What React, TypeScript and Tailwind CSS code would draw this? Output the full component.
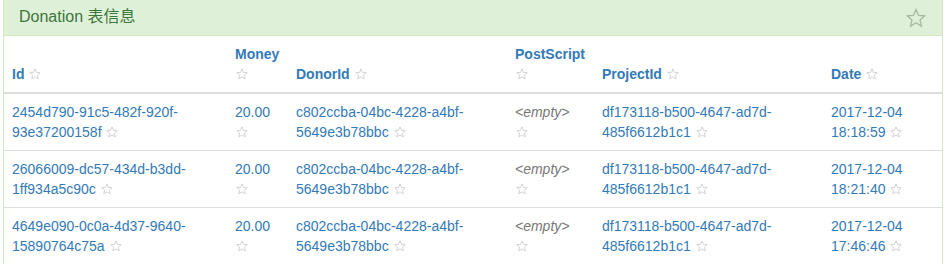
import React from 'react';

interface Donation {
  id: string;
  money: string;
  donorId: string;
  projectId: string;
  date: string;
}

const ROWS: Donation[] = [
  {
    id: '2454d790-91c5-482f-920f-93e37200158f',
    money: '20.00',
    donorId: 'c802ccba-04bc-4228-a4bf-5649e3b78bbc',
    projectId: 'df173118-b500-4647-ad7d-485f6612b1c1',
    date: '2017-12-04 18:18:59',
  },
  {
    id: '26066009-dc57-434d-b3dd-1ff934a5c90c',
    money: '20.00',
    donorId: 'c802ccba-04bc-4228-a4bf-5649e3b78bbc',
    projectId: 'df173118-b500-4647-ad7d-485f6612b1c1',
    date: '2017-12-04 18:21:40',
  },
  {
    id: '4649e090-0c0a-4d37-9640-15890764c75a',
    money: '20.00',
    donorId: 'c802ccba-04bc-4228-a4bf-5649e3b78bbc',
    projectId: 'df173118-b500-4647-ad7d-485f6612b1c1',
    date: '2017-12-04 17:46:46',
  },
];

const COLUMNS = [
  { label: 'Id', width: 'w-[223px]' },
  { label: 'Money', width: 'w-[61px]' },
  { label: 'DonorId', width: 'w-[219px]' },
  { label: 'PostScript', width: 'w-[87px]' },
  { label: 'ProjectId', width: 'w-[229px]' },
  { label: 'Date', width: 'w-[119px]' },
];

function Star({ className = 'h-3 w-[14px] text-[#c6c6c6]' }: { className?: string }) {
  return (
    <svg
      viewBox="0 0 24 24"
      className={`inline-block align-[-1px] ${className}`}
      fill="none"
      stroke="currentColor"
      strokeWidth="1.5"
      aria-hidden
    >
      <path d="M12 1.8l3 7 7.4.6-5.6 4.9 1.7 7.4L12 17.8l-6.5 3.9 1.7-7.4-5.6-4.9 7.4-.6z" />
    </svg>
  );
}

function Cell({ text, muted = false }: { text: string; muted?: boolean }) {
  return (
    <td className="border-t border-[#ddd] p-2 align-top">
      {muted ? (
        <span className="italic text-[#777]">&lt;empty&gt;</span>
      ) : (
        <span className="text-[#337ab7]">{text}</span>
      )}{' '}
      <Star />
    </td>
  );
}

export default function App() {
  return (
    <div className="bg-white pl-[3px] font-['Liberation_Sans',Arial,sans-serif] text-sm leading-5">
      <div className="w-[940px] border-x border-[#d6e9c6]">
        <div className="flex h-[36px] items-center justify-between border-b border-[#d6e9c6] bg-[#dff0d8] pl-[15px] pr-[16px]">
          <h3 className="pb-[1px] font-['Liberation_Sans','Noto_Sans_CJK_SC',sans-serif] text-base leading-none text-[#3c763d]">
            Donation 表信息
          </h3>
          <Star className="mt-[1px] h-[20px] w-[20px] text-[#a8b8a2]" />
        </div>
        <table className="w-[938px] table-fixed border-collapse">
          <colgroup>
            {COLUMNS.map((c) => (
              <col key={c.label} className={c.width} />
            ))}
          </colgroup>
          <thead>
            <tr>
              {COLUMNS.map((c) => (
                <th
                  key={c.label}
                  className="border-b-2 border-[#ddd] p-2 text-left align-bottom font-bold text-[#337ab7]"
                >
                  {c.label} <Star />
                </th>
              ))}
            </tr>
          </thead>
          <tbody>
            {ROWS.map((r) => (
              <tr key={r.id}>
                <Cell text={r.id} />
                <Cell text={r.money} />
                <Cell text={r.donorId} />
                <Cell text="" muted />
                <Cell text={r.projectId} />
                <Cell text={r.date} />
              </tr>
            ))}
          </tbody>
        </table>
      </div>
    </div>
  );
}
